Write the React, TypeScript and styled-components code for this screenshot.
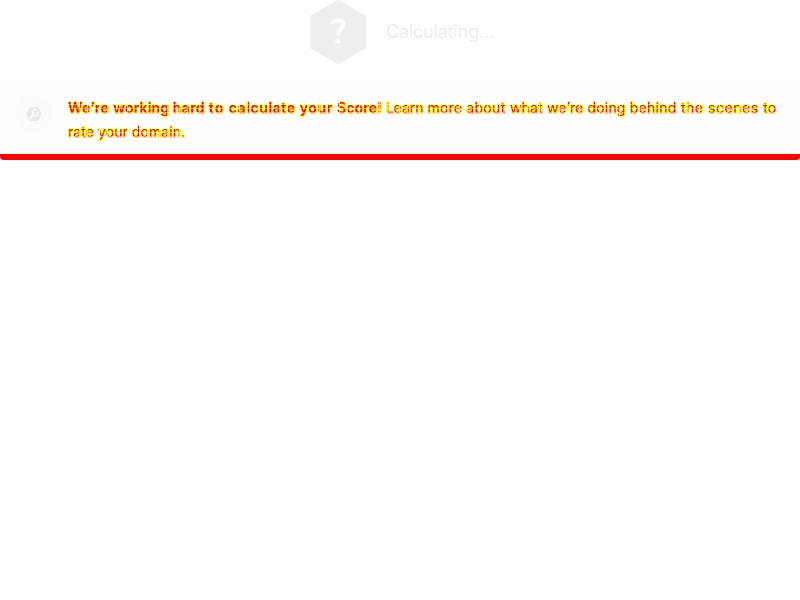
import React from 'react';
import styled, { createGlobalStyle } from 'styled-components';

const GlobalStyle = createGlobalStyle`
  * { box-sizing: border-box; }
  body { margin: 0; background: #fff; font-family: Inter, "Liberation Sans", sans-serif; }
`;
const Page = styled.main`
  width: 800px;
  height: 600px;
  overflow: hidden;
  background: #fefefe;
`;
const Status = styled.header`
  display: flex;
  height: 80px;
  padding-left: 310px;
  gap: 20px;
`;
const Hexagon = styled.svg`
  width: 56px;
  height: 64px;
  flex: none;
`;
const StatusText = styled.span`
  height: 64px;
  line-height: 64px;
  font-size: 18px;
  letter-spacing: -0.2px;
  color: #efefef;
  white-space: nowrap;
`;
const Notice = styled.section`
  display: flex;
  gap: 16px;
  height: 80px;
  padding: 16px 16px 0;
  background: #fdfdfd;
  border-bottom: 6px solid #f00;
  border-radius: 0 0 4px 4px;
`;
const Badge = styled.div`
  display: flex;
  align-items: center;
  justify-content: center;
  flex: none;
  width: 36px;
  height: 36px;
  border-radius: 50%;
  background: #fbfbfb;
`;
const Message = styled.p`
  margin: 0;
  font-size: 14px;
  line-height: 24px;
  white-space: nowrap;
`;
/* Broken lettering: narrow pale gaps fall at irregular intervals across the line. */
const Line = styled.span<{ $tracking?: number }>`
  display: block;
  color: #f00;
  letter-spacing: ${p => p.$tracking ?? 0}px;
  -webkit-text-stroke: 2px #ff0;
  paint-order: stroke fill;
  mask-image:
    repeating-linear-gradient(90deg, #000 0 11px, rgba(0, 0, 0, 0.2) 11px 12px, #000 12px 19px, rgba(0, 0, 0, 0.3) 19px 20px),
    repeating-linear-gradient(0deg, #000 0 3px, rgba(0, 0, 0, 0.55) 3px 4px);
  mask-composite: intersect;
`;
const Word = styled.span<{ $bold?: boolean; $tracking: number }>`
  font-weight: ${p => (p.$bold ? 600 : 400)};
  letter-spacing: ${p => p.$tracking}px;
`;

const words: { text: string; tracking: number; bold?: boolean }[] = [
  { text: 'We’re', tracking: 0.5, bold: true },
  { text: 'working', tracking: 0.13, bold: true },
  { text: 'hard', tracking: 0.4, bold: true },
  { text: 'to', tracking: 1, bold: true },
  { text: 'calculate', tracking: 0.6, bold: true },
  { text: 'your', tracking: 0.6, bold: true },
  { text: 'Score!', tracking: 0.2, bold: true },
  { text: 'Learn', tracking: 0 },
  { text: 'more', tracking: 0.2 },
  { text: 'about', tracking: 0.33 },
  { text: 'what', tracking: 0.2 },
  { text: 'we’re', tracking: 0.17 },
  { text: 'doing', tracking: 0.17 },
  { text: 'behind', tracking: 0.29 },
  { text: 'the', tracking: 0.5 },
  { text: 'scenes', tracking: 0.57 },
  { text: 'to', tracking: 0 },
];

export default function App() {
  return (
    <>
      <GlobalStyle />
      <Page>
        <Status>
          <Hexagon viewBox="0 0 56 64">
            <path d="M28 0 56 16V48L28 64 0 48V16Z" fill="#eee" />
            <path d="M21.4 23.3C23.5 21 26 20.6 28.3 20.6C31.6 20.6 33.2 22 33.2 24.6C33.2 29 27.8 29.5 27.8 35.2" fill="none" stroke="#fefefe" strokeWidth="4" />
            <circle cx="28" cy="41" r="2.6" fill="#fefefe" />
          </Hexagon>
          <StatusText>Calculating...</StatusText>
        </Status>
        <Notice>
          <Badge>
            <svg width="16" height="14" viewBox="0 0 16 14">
              <path d="M4 0H12L16 7 12 14H4L0 7Z" fill="#e8e8e8" />
              <path d="M10.1 2.9A3 3 0 1 0 12.3 5.1" fill="none" stroke="#fbfbfb" strokeWidth="1.8" />
              <path d="M4.2 11.2 7.6 7.8" stroke="#fbfbfb" strokeWidth="2.2" strokeLinecap="round" />
            </svg>
          </Badge>
          <Message>
            <Line>
              {words.map((word, i) => (
                <Word key={i} $bold={word.bold} $tracking={word.tracking}>
                  {i < words.length - 1 ? word.text + ' ' : word.text}
                </Word>
              ))}
            </Line>
            <Line $tracking={0.07}>rate your domain.</Line>
          </Message>
        </Notice>
      </Page>
    </>
  );
}
